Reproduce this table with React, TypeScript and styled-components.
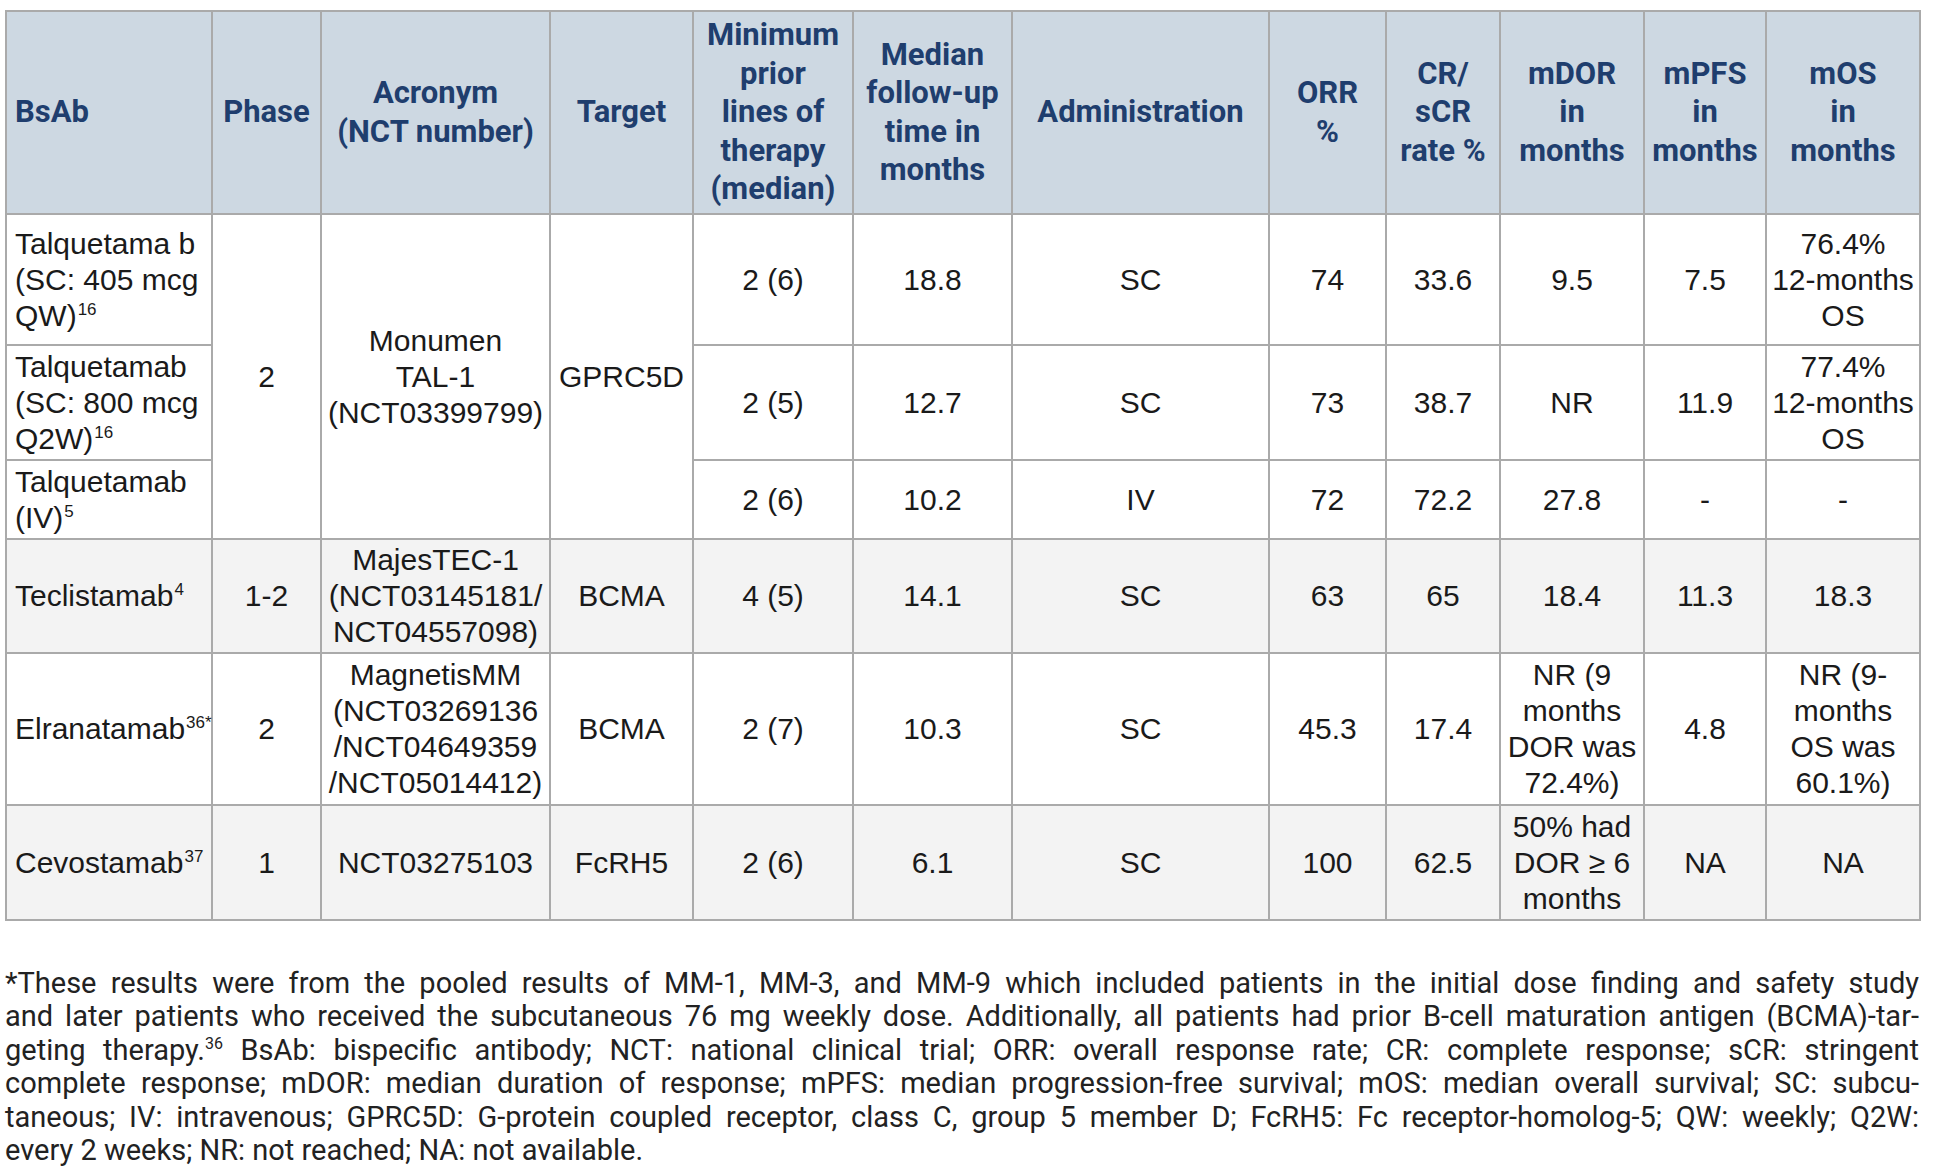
import React from "react";
import styled, { createGlobalStyle } from "styled-components";

const GlobalStyle = createGlobalStyle`
  html, body {
    margin: 0;
    padding: 0;
    background: #ffffff;
  }
`;

const Page = styled.div`
  width: 1914px;
  padding: 10px 15px 0 5px;
  display: flex;
  flex-direction: column;
`;

const Table = styled.table`
  width: 1914px;
  table-layout: fixed;
  border-collapse: collapse;
  font-family: "Liberation Sans", Arial, sans-serif;
  font-size: 30px;
  line-height: 36px;
  color: #1a1a1a;
`;

const Row = styled.tr<{ $h: number; $shade?: boolean }>`
  height: ${(p) => p.$h}px;
  background: ${(p) => (p.$shade ? "#f3f3f3" : "#ffffff")};
`;

const HeadRow = styled.tr<{ $h: number }>`
  height: ${(p) => p.$h}px;
  background: #cdd8e2;
`;

const Th = styled.th<{ $left?: boolean }>`
  border: 2px solid #aaaaaa;
  padding: 0 ${(p) => (p.$left ? "6px 0 8px" : "2px")};
  font-family: Roboto, "Liberation Sans", sans-serif;
  font-weight: 700;
  font-size: 31px;
  line-height: 38.5px;
  color: #1f3e6e;
  text-align: ${(p) => (p.$left ? "left" : "center")};
  vertical-align: middle;
  white-space: nowrap;
`;

const Td = styled.td<{ $left?: boolean }>`
  border: 2px solid #aaaaaa;
  padding: 0 ${(p) => (p.$left ? "4px 0 8px" : "2px")};
  text-align: ${(p) => (p.$left ? "left" : "center")};
  vertical-align: middle;
  white-space: nowrap;
`;

const Sup = styled.sup`
  font-size: 17px;
  line-height: 0;
  vertical-align: 11px;
  margin-left: 1px;
`;

const Footnote = styled.div`
  margin-top: 46px;
  width: 1914px;
  font-family: Roboto, "Liberation Sans", sans-serif;
  font-size: 29px;
  line-height: 33.4px;
  color: #222222;
  display: flex;
  flex-direction: column;
`;

const FootLine = styled.span<{ $last?: boolean }>`
  display: block;
  white-space: nowrap;
  text-align: ${(p) => (p.$last ? "left" : "justify")};
  text-align-last: ${(p) => (p.$last ? "left" : "justify")};
`;

const FootSup = styled.sup`
  font-size: 16px;
  line-height: 0;
  vertical-align: 11px;
`;

const colWidths = [206, 109, 229, 143, 160, 159, 257, 117, 114, 144, 122, 154];

const L = ({ lines }: { lines: React.ReactNode[] }) => (
  <>
    {lines.map((l, i) => (
      <React.Fragment key={i}>
        {i > 0 && <br />}
        {l}
      </React.Fragment>
    ))}
  </>
);

const headers: { lines: string[]; left?: boolean }[] = [
  { lines: ["BsAb"], left: true },
  { lines: ["Phase"] },
  { lines: ["Acronym", "(NCT number)"] },
  { lines: ["Target"] },
  { lines: ["Minimum", "prior", "lines of", "therapy", "(median)"] },
  { lines: ["Median", "follow-up", "time in", "months"] },
  { lines: ["Administration"] },
  { lines: ["ORR", "%"] },
  { lines: ["CR/", "sCR", "rate %"] },
  { lines: ["mDOR", "in", "months"] },
  { lines: ["mPFS", "in", "months"] },
  { lines: ["mOS", "in", "months"] },
];

const footLines = [
  "*These results were from the pooled results of MM-1, MM-3, and MM-9 which included patients in the initial dose finding and safety study",
  "and later patients who received the subcutaneous 76 mg weekly dose. Additionally, all patients had prior B-cell maturation antigen (BCMA)-tar-",
  null,
  "complete response; mDOR: median duration of response; mPFS: median progression-free survival; mOS: median overall survival; SC: subcu-",
  "taneous; IV: intravenous; GPRC5D: G-protein coupled receptor, class C, group 5 member D; FcRH5: Fc receptor-homolog-5; QW: weekly; Q2W:",
  "every 2 weeks; NR: not reached; NA: not available.",
];

export default function App() {
  return (
    <Page>
      <GlobalStyle />
      <Table>
        <colgroup>
          {colWidths.map((w, i) => (
            <col key={i} style={{ width: w }} />
          ))}
        </colgroup>
        <thead>
          <HeadRow $h={203}>
            {headers.map((h, i) => (
              <Th key={i} $left={h.left}>
                <L lines={h.lines} />
              </Th>
            ))}
          </HeadRow>
        </thead>
        <tbody>
          <Row $h={131}>
            <Td $left>
              <L lines={["Talquetama b", "(SC: 405 mcg", <>QW)<Sup>16</Sup></>]} />
            </Td>
            <Td rowSpan={3}>2</Td>
            <Td rowSpan={3}>
              <L lines={["Monumen", "TAL-1", "(NCT03399799)"]} />
            </Td>
            <Td rowSpan={3}>GPRC5D</Td>
            <Td>2 (6)</Td>
            <Td>18.8</Td>
            <Td>SC</Td>
            <Td>74</Td>
            <Td>33.6</Td>
            <Td>9.5</Td>
            <Td>7.5</Td>
            <Td>
              <L lines={["76.4%", "12-months", "OS"]} />
            </Td>
          </Row>
          <Row $h={115}>
            <Td $left>
              <L lines={["Talquetamab", "(SC: 800 mcg", <>Q2W)<Sup>16</Sup></>]} />
            </Td>
            <Td>2 (5)</Td>
            <Td>12.7</Td>
            <Td>SC</Td>
            <Td>73</Td>
            <Td>38.7</Td>
            <Td>NR</Td>
            <Td>11.9</Td>
            <Td>
              <L lines={["77.4%", "12-months", "OS"]} />
            </Td>
          </Row>
          <Row $h={79}>
            <Td $left>
              <L lines={["Talquetamab", <>(IV)<Sup>5</Sup></>]} />
            </Td>
            <Td>2 (6)</Td>
            <Td>10.2</Td>
            <Td>IV</Td>
            <Td>72</Td>
            <Td>72.2</Td>
            <Td>27.8</Td>
            <Td>-</Td>
            <Td>-</Td>
          </Row>
          <Row $h={114} $shade>
            <Td $left>
              Teclistamab<Sup>4</Sup>
            </Td>
            <Td>1-2</Td>
            <Td>
              <L lines={["MajesTEC-1", "(NCT03145181/", "NCT04557098)"]} />
            </Td>
            <Td>BCMA</Td>
            <Td>4 (5)</Td>
            <Td>14.1</Td>
            <Td>SC</Td>
            <Td>63</Td>
            <Td>65</Td>
            <Td>18.4</Td>
            <Td>11.3</Td>
            <Td>18.3</Td>
          </Row>
          <Row $h={152}>
            <Td $left>
              Elranatamab<Sup>36*</Sup>
            </Td>
            <Td>2</Td>
            <Td>
              <L lines={["MagnetisMM", "(NCT03269136", "/NCT04649359", "/NCT05014412)"]} />
            </Td>
            <Td>BCMA</Td>
            <Td>2 (7)</Td>
            <Td>10.3</Td>
            <Td>SC</Td>
            <Td>45.3</Td>
            <Td>17.4</Td>
            <Td>
              <L lines={["NR (9", "months", "DOR was", "72.4%)"]} />
            </Td>
            <Td>4.8</Td>
            <Td>
              <L lines={["NR (9-", "months", "OS was", "60.1%)"]} />
            </Td>
          </Row>
          <Row $h={115} $shade>
            <Td $left>
              Cevostamab<Sup>37</Sup>
            </Td>
            <Td>1</Td>
            <Td>NCT03275103</Td>
            <Td>FcRH5</Td>
            <Td>2 (6)</Td>
            <Td>6.1</Td>
            <Td>SC</Td>
            <Td>100</Td>
            <Td>62.5</Td>
            <Td>
              <L lines={["50% had", "DOR \u2265 6", "months"]} />
            </Td>
            <Td>NA</Td>
            <Td>NA</Td>
          </Row>
        </tbody>
      </Table>
      <Footnote>
        {footLines.map((t, i) =>
          t === null ? (
            <FootLine key={i}>
              geting therapy.<FootSup>36</FootSup> BsAb: bispecific antibody; NCT: national clinical trial; ORR: overall response rate; CR: complete response; sCR: stringent
            </FootLine>
          ) : (
            <FootLine key={i} $last={i === footLines.length - 1}>
              {t}
            </FootLine>
          )
        )}
      </Footnote>
    </Page>
  );
}
